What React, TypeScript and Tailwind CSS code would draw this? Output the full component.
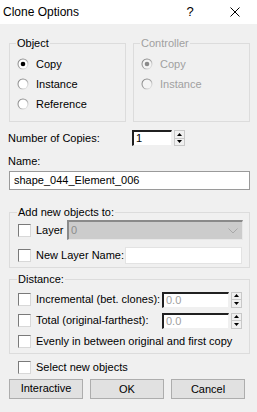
import React from "react";

function Radio({ checked, disabled, id }: { checked?: boolean; disabled?: boolean; id: string }) {
  return (
    <svg width="12" height="12" viewBox="0 0 12 12" className="shrink-0">
      <defs>
        <linearGradient id={id} x1="0" y1="0" x2="1" y2="1">
          <stop offset="0" stopColor="#7a7a7a" />
          <stop offset="0.5" stopColor="#a0a0a0" />
          <stop offset="1" stopColor="#ffffff" />
        </linearGradient>
      </defs>
      <circle cx="6" cy="6" r="5.5" fill={`url(#${id})`} />
      <circle cx="6" cy="6" r="4.5" fill={disabled ? "#f4f4f4" : "#ffffff"} />
      {checked && <circle cx="6" cy="6" r="2.3" fill={disabled ? "#8a8a8a" : "#000000"} />}
    </svg>
  );
}

function Check() {
  return (
    <span className="block w-[13px] h-[13px] shrink-0 bg-white border border-t-[#7a7a7a] border-l-[#7a7a7a] border-r-[#d8d8d8] border-b-[#d8d8d8]" />
  );
}

function Spinner({ h }: { h: string }) {
  return (
    <div className={`flex flex-col w-[11px] ${h} ml-[2px] shrink-0 border border-[#c8c8c8] bg-[#f0f0f0]`}>
      <div className="flex-1 flex items-center justify-center border-b border-[#c8c8c8]">
        <svg width="5" height="3" viewBox="0 0 5 3">
          <path d="M0 3 L2.5 0 L5 3 Z" fill="#000" />
        </svg>
      </div>
      <div className="flex-1 flex items-center justify-center">
        <svg width="5" height="3" viewBox="0 0 5 3">
          <path d="M0 0 L2.5 3 L5 0 Z" fill="#000" />
        </svg>
      </div>
    </div>
  );
}

function Sunken({ value, w, h, gray }: { value: string; w: string; h: string; gray?: boolean }) {
  return (
    <div
      className={`${w} ${h} shrink-0 bg-white border-t-2 border-l-2 border-r border-b border-t-[#202020] border-l-[#202020] border-r-[#f0f0f0] border-b-[#f0f0f0] flex items-center pl-[2px] ${gray ? "text-[#a0a0a0]" : "text-black"}`}
    >
      {value}
    </div>
  );
}

export default function App() {
  return (
    <div className="w-[257px] h-[412px] bg-[#f0f0f0] flex flex-col font-['Liberation_Sans',Arial,sans-serif] text-[11px] leading-[13px] text-black overflow-hidden">
      {/* Title bar */}
      <div className="h-[24px] bg-white flex items-center shrink-0">
        <span className="pl-[3px] text-[12px] leading-[16px] flex-1">Clone Options</span>
        <span className="text-[13px] leading-[16px] w-[12px] mr-[34px] text-center">?</span>
        <svg width="10" height="10" viewBox="0 0 10 10" className="mr-[17px]">
          <path d="M0.5 0.5 L9.5 9.5 M9.5 0.5 L0.5 9.5" stroke="#000" strokeWidth="1" />
        </svg>
      </div>

      <div className="pl-[9px] pr-[7px] flex flex-col">
        {/* Object / Controller */}
        <div className="mt-[12px] flex gap-[7px]">
          <fieldset className="w-[117px] border border-[#dcdcdc] pl-[7px] pt-[4px] pb-[7px]">
            <legend className="-ml-[1px] px-[1px] leading-[14px]">Object</legend>
            <div className="h-[20px] flex items-center gap-[7px]">
              <Radio id="ra" checked />
              <span>Copy</span>
            </div>
            <div className="h-[20px] flex items-center gap-[7px]">
              <Radio id="rb" />
              <span>Instance</span>
            </div>
            <div className="h-[20px] flex items-center gap-[7px]">
              <Radio id="rc" />
              <span>Reference</span>
            </div>
          </fieldset>
          <fieldset className="w-[117px] border border-[#dcdcdc] pl-[7px] pt-[4px] pb-[7px] text-[#a0a0a0]">
            <legend className="-ml-[1px] px-[1px] leading-[14px]">Controller</legend>
            <div className="h-[20px] flex items-center gap-[7px]">
              <Radio id="rd" checked disabled />
              <span>Copy</span>
            </div>
            <div className="h-[20px] flex items-center gap-[7px]">
              <Radio id="re" disabled />
              <span>Instance</span>
            </div>
          </fieldset>
        </div>

        {/* Number of copies */}
        <div className="mt-[8px] h-[16px] flex items-center -ml-[1px]">
          <span className="w-[124px] shrink-0">Number of Copies:</span>
          <Sunken value="1" w="w-[40px]" h="h-[16px]" />
          <Spinner h="h-[16px]" />
        </div>

        {/* Name */}
        <div className="mt-[9px] -ml-[1px]">Name:</div>
        <div className="mt-[3px] h-[19px] bg-white border border-[#9a9a9a] flex items-center pl-[4px]">
          shape_044_Element_006
        </div>

        {/* Add new objects to */}
        <fieldset className="mt-[15px] border border-[#dcdcdc] pl-[8px] pt-[1px] pb-[2px]">
          <legend className="-ml-[1px] px-[1px] leading-[14px]">Add new objects to:</legend>
          <div className="h-[20px] flex items-center">
            <Check />
            <span className="ml-[5px] w-[31px] shrink-0">Layer</span>
            <div className="w-[176px] h-[20px] bg-[#cccccc] border-t-2 border-l-2 border-r border-b border-t-[#8a8a8a] border-l-[#8a8a8a] border-r-[#e8e8e8] border-b-[#e8e8e8] flex items-center pl-[2px] text-[#8c8c8c]">
              <span className="flex-1">0</span>
              <svg width="10" height="6" viewBox="0 0 10 6" className="mr-[4px]">
                <path d="M0.5 0.5 L5 5 L9.5 0.5" stroke="#a8a8a8" strokeWidth="1" fill="none" />
              </svg>
            </div>
          </div>
          <div className="h-[20px] mt-[5px] flex items-center">
            <Check />
            <span className="ml-[5px] w-[89px] shrink-0">New Layer Name:</span>
            <div className="w-[117px] h-[17px] bg-white border border-[#e3e3e3]" />
          </div>
        </fieldset>

        {/* Distance */}
        <fieldset className="mt-[4px] border border-[#dcdcdc] pl-[8px] pt-[3px] pb-[1px]">
          <legend className="-ml-[1px] px-[1px] leading-[14px]">Distance:</legend>
          <div className="h-[21px] flex items-center">
            <Check />
            <span className="ml-[5px] w-[126px] shrink-0">Incremental (bet. clones):</span>
            <Sunken value="0.0" w="w-[67px]" h="h-[16px]" gray />
            <Spinner h="h-[16px]" />
          </div>
          <div className="h-[21px] flex items-center">
            <Check />
            <span className="ml-[5px] w-[126px] shrink-0">Total (original-farthest):</span>
            <Sunken value="0.0" w="w-[67px]" h="h-[16px]" gray />
            <Spinner h="h-[16px]" />
          </div>
          <div className="h-[21px] flex items-center">
            <Check />
            <span className="ml-[5px]">Evenly in between original and first copy</span>
          </div>
        </fieldset>

        {/* Select new objects */}
        <div className="mt-[3px] h-[20px] flex items-center pl-[9px]">
          <Check />
          <span className="ml-[5px]">Select new objects</span>
        </div>

        {/* Buttons */}
        <div className="mt-[2px] flex gap-[7px]">
          <button className="w-[74px] h-[20px] bg-[#e1e1e1] border border-[#adadad] text-[11px] leading-[13px] pb-[2px]">Interactive</button>
          <button className="w-[74px] h-[20px] bg-[#e1e1e1] border border-[#adadad] text-[11px] leading-[13px]">OK</button>
          <button className="w-[74px] h-[20px] bg-[#e1e1e1] border border-[#adadad] text-[11px] leading-[13px]">Cancel</button>
        </div>
      </div>
    </div>
  );
}
